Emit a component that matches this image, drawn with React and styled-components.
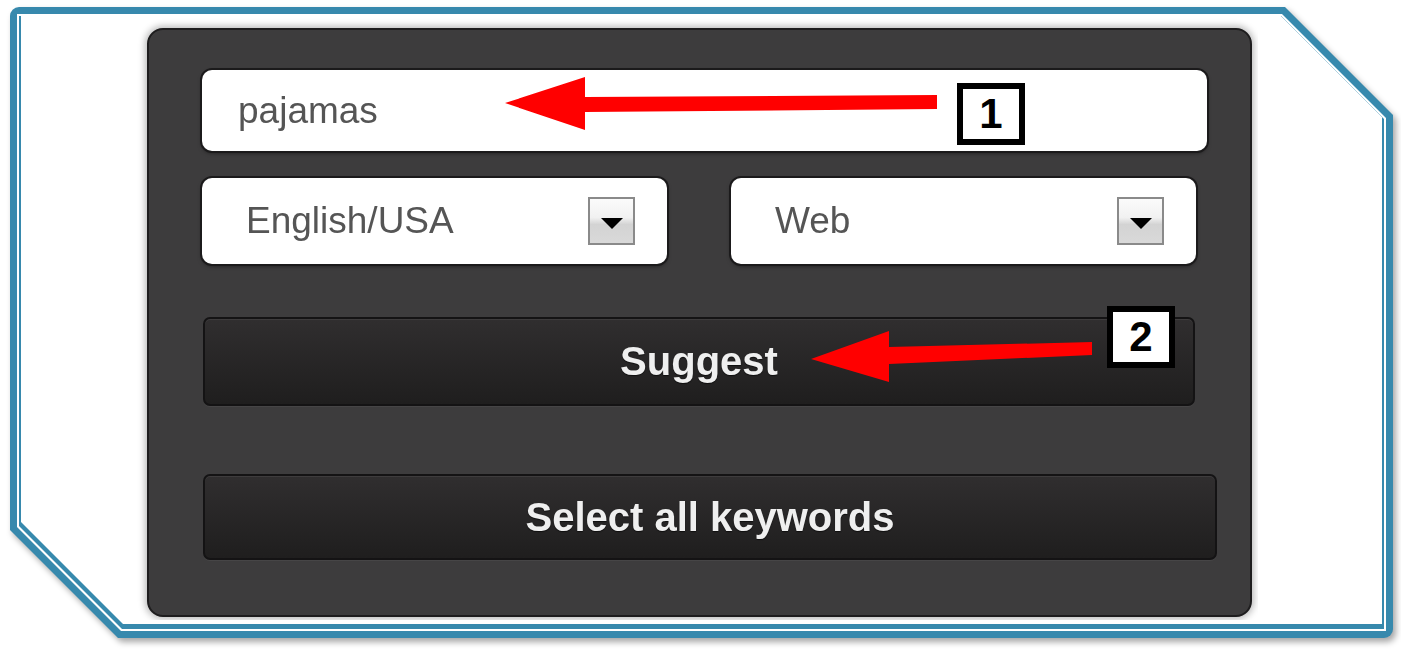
import React from "react";
import styled, { createGlobalStyle } from "styled-components";

const GlobalStyle = createGlobalStyle`
  html, body {
    margin: 0;
    padding: 0;
    background: #fff;
  }
  body {
    font-family: "Liberation Sans", Arial, sans-serif;
  }
  * {
    box-sizing: border-box;
  }
`;

// chamfered corners top-right and bottom-left, optional overhang at the top
const chamfer = (c, lift = 0) =>
  `polygon(0 ${-lift}px, calc(100% - ${c + lift}px) ${-lift}px, 100% ${c}px, 100% 100%, ${c}px 100%, 0 calc(100% - ${c}px))`;

const Page = styled.div`
  padding: 7px 0 0 10px;
  width: 1401px;
  height: 653px;
`;

const Frame = styled.div`
  width: 1383px;
  height: 631px;
  filter: drop-shadow(3px 4px 3px rgba(0, 0, 0, 0.35));
`;

const Ring = styled.div`
  height: 100%;
  padding: ${(p) => p.$pad}px;
  background: ${(p) => p.$tone};
  clip-path: ${(p) => chamfer(p.$cut)};
  border-radius: ${(p) => p.$radius || 0}px;
`;

const Canvas = styled.div`
  height: 100%;
  padding-left: 109px;
  background: #fff;
  clip-path: ${chamfer(102, 3)};
`;

const Shot = styled.div`
  width: 1128px;
  height: 605px;
  margin-top: -3px;
  padding: 13px 0 0 17px;
  background: #fff;
  overflow: hidden;
`;

const Panel = styled.div`
  width: 1105px;
  height: 589px;
  padding: 40px 0 0 53px;
  display: flex;
  flex-direction: column;
  align-items: flex-start;
  background: #3d3c3d;
  border: 2px solid #1e1d1e;
  border-radius: 16px;
  box-shadow: 0 0 7px 2px rgba(0, 0, 0, 0.28);
`;

const Field = styled.div`
  position: relative;
  display: flex;
  align-items: center;
  justify-content: space-between;
  width: ${(p) => p.$w}px;
  height: ${(p) => p.$h}px;
  padding-left: ${(p) => p.$indent}px;
  background: #fff;
  color: #555;
  font-size: 37px;
  border-radius: 10px;
  box-shadow: 0 0 0 2px #1b1a1b, 0 2px 4px rgba(0, 0, 0, 0.55);
`;

const Row = styled.div`
  display: flex;
  gap: 64px;
  margin-top: 27px;
`;

const SelectBox = styled.div`
  position: relative;
  width: 47px;
  height: 48px;
  margin-right: 32px;
  display: flex;
  align-items: center;
  justify-content: center;
  border: 2px solid #8a8a8a;
  background: linear-gradient(#fbfbfb 0%, #f1f1f1 42%, #d3d3d3 58%, #d9d9d9 100%);

  &::after {
    content: "";
    margin-top: 4px;
    border-left: 11px solid transparent;
    border-right: 11px solid transparent;
    border-top: 11px solid #000;
  }
`;

const Button = styled.div`
  position: relative;
  display: flex;
  align-items: center;
  justify-content: center;
  width: ${(p) => p.$w}px;
  height: ${(p) => p.$h}px;
  margin-top: ${(p) => p.$top}px;
  margin-left: 1px;
  color: #efefef;
  font-size: 40px;
  font-weight: bold;
  text-shadow: 0 1px 1px rgba(0, 0, 0, 0.6);
  background: linear-gradient(#302e2f, #1f1e1e);
  border: 2px solid #141314;
  border-radius: 7px;
  box-shadow: inset 0 1px 0 rgba(255, 255, 255, 0.07), 0 1px 0 rgba(255, 255, 255, 0.05);
`;

const Callout = styled.div`
  position: absolute;
  left: ${(p) => p.$x}px;
  top: ${(p) => p.$y}px;
  width: 68px;
  height: 62px;
  display: flex;
  align-items: center;
  justify-content: center;
  background: #fff;
  border: 6px solid #000;
  color: #000;
  font-size: 42px;
  font-weight: bold;
  text-shadow: none;
`;

const ArrowSvg = styled.svg`
  position: absolute;
  left: ${(p) => p.$x}px;
  top: ${(p) => p.$y}px;
  overflow: visible;
`;

const Arrow = ({ x, y, w, h, points }) => (
  <ArrowSvg $x={x} $y={y} width={w} height={h} viewBox={`0 0 ${w} ${h}`}>
    <polygon points={points} fill="#ff0000" />
  </ArrowSvg>
);

export default function App() {
  return (
    <>
      <GlobalStyle />
      <Page>
        <Frame>
          <Ring $tone="#3789ad" $pad={7} $cut={108} $radius={9}>
            <Ring $tone="#fff" $pad={2} $cut={104}>
              <Ring $tone="#3789ad" $pad={2} $cut={103}>
                <Canvas>
                  <Shot>
                    <Panel>
                      <Field $w={1005} $h={81} $indent={36}>
                        pajamas
                        <Arrow
                          x={301}
                          y={6}
                          w={436}
                          h={56}
                          points="2,27 82,1 82,21 434,19 434,33 82,36 82,54"
                        />
                        <Callout $x={755} $y={13}>1</Callout>
                      </Field>
                      <Row>
                        <Field $w={465} $h={86} $indent={44}>
                          English/USA
                          <SelectBox />
                        </Field>
                        <Field $w={465} $h={86} $indent={44}>
                          Web
                          <SelectBox />
                        </Field>
                      </Row>
                      <Button $w={992} $h={89} $top={53}>
                        Suggest
                        <Arrow
                          x={603}
                          y={9}
                          w={286}
                          h={57}
                          points="3,31 81,3 81,19 284,14 284,27 81,36 81,54"
                        />
                        <Callout $x={902} $y={-13}>2</Callout>
                      </Button>
                      <Button $w={1014} $h={86} $top={68}>
                        Select all keywords
                      </Button>
                    </Panel>
                  </Shot>
                </Canvas>
              </Ring>
            </Ring>
          </Ring>
        </Frame>
      </Page>
    </>
  );
}
